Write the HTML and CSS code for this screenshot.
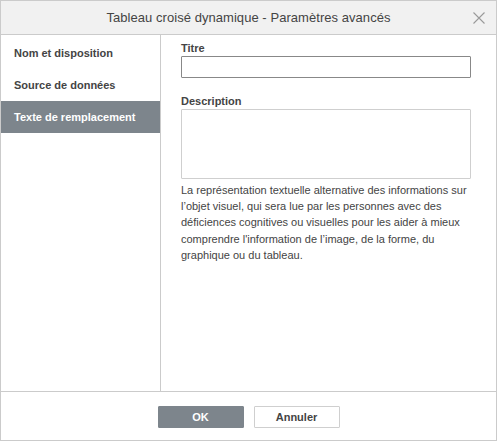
FILE: index.html
```html
<!DOCTYPE html>
<html lang="fr">
<head>
<meta charset="utf-8">
<title>Tableau croisé dynamique - Paramètres avancés</title>
<link rel="stylesheet" href="styles.css">
</head>
<body>
<div class="dialog">
  <div class="header">
    <span class="title">Tableau croisé dynamique - Paramètres avancés</span>
    <span class="close">
      <svg width="12" height="12" viewBox="0 0 12 12"><path d="M0.5 0.5 L11.5 11.5 M11.5 0.5 L0.5 11.5" stroke="#9a9a9a" stroke-width="1.1" fill="none"/></svg>
    </span>
  </div>
  <div class="body">
    <div class="sidebar">
      <div class="item">Nom et disposition</div>
      <div class="item">Source de données</div>
      <div class="item active">Texte de remplacement</div>
    </div>
    <div class="content">
      <div class="label">Titre</div>
      <div class="input focused"></div>
      <div class="label label-desc">Description</div>
      <div class="textarea"></div>
      <p class="help">La représentation textuelle alternative des informations sur l’objet visuel, qui sera lue par les personnes avec des déficiences cognitives ou visuelles pour les aider à mieux comprendre l'information de l’image, de la forme, du graphique ou du tableau.</p>
    </div>
  </div>
  <div class="footer">
    <button class="btn primary">OK</button>
    <button class="btn">Annuler</button>
  </div>
</div>
</body>
</html>
```
FILE: styles.css
```css
html, body {
  margin: 0;
  padding: 0;
  background: #fff;
}
body {
  font-family: Arial, "Liberation Sans", sans-serif;
  color: #444;
}
.dialog {
  width: 497px;
  height: 441px;
  box-sizing: border-box;
  border: 1px solid #cbcbcb;
  display: flex;
  flex-direction: column;
  background: #fff;
}
.header {
  height: 33px;
  flex: none;
  background: #f1f1f1;
  border-bottom: 1px solid #cbcbcb;
  display: flex;
  align-items: center;
  justify-content: center;
  position: relative;
}
.title {
  font-size: 13px;
  color: #444;
  letter-spacing: 0.05px;
}
.close {
  position: absolute;
  right: 11px;
  top: 11px;
  width: 12px;
  height: 12px;
  display: block;
}
.close svg { display: block; }
.body {
  flex: 1;
  display: flex;
  min-height: 0;
}
.sidebar {
  width: 159px;
  flex: none;
  border-right: 1px solid #cbcbcb;
  padding-top: 2px;
}
.item {
  height: 32px;
  display: flex;
  align-items: center;
  padding-left: 13px;
  font-size: 11px;
  font-weight: bold;
  color: #444;
}
.item.active {
  background: #7d858c;
  color: #fff;
}
.content {
  flex: 1;
  padding: 6px 25px 0 20px;
}
.label {
  font-size: 11px;
  font-weight: bold;
  height: 15px;
  line-height: 15px;
  margin-bottom: 0px;
}
.input {
  height: 20px;
  border: 1px solid #cfcfcf;
  border-radius: 1px;
}
.input.focused {
  border-color: #888;
}
.label-desc {
  margin-top: 16px;
}
.textarea {
  height: 68px;
  border: 1px solid #cfcfcf;
  border-radius: 1px;
}
.help {
  margin: 3px 0 0 0;
  font-size: 11px;
  line-height: 16.2px;
  color: #444;
}
.footer {
  height: 49px;
  flex: none;
  border-top: 1px solid #cbcbcb;
  display: flex;
  justify-content: center;
  align-items: flex-start;
  gap: 10px;
  padding-top: 14px;
  box-sizing: border-box;
}
.btn {
  width: 86px;
  height: 22px;
  box-sizing: border-box;
  border: 1px solid #cfcfcf;
  background: #fff;
  color: #444;
  font-family: Arial, "Liberation Sans", sans-serif;
  font-size: 11px;
  font-weight: bold;
  border-radius: 1px;
  padding: 0;
}
.btn.primary {
  background: #7d858c;
  border-color: #7d858c;
  color: #fff;
}
```
